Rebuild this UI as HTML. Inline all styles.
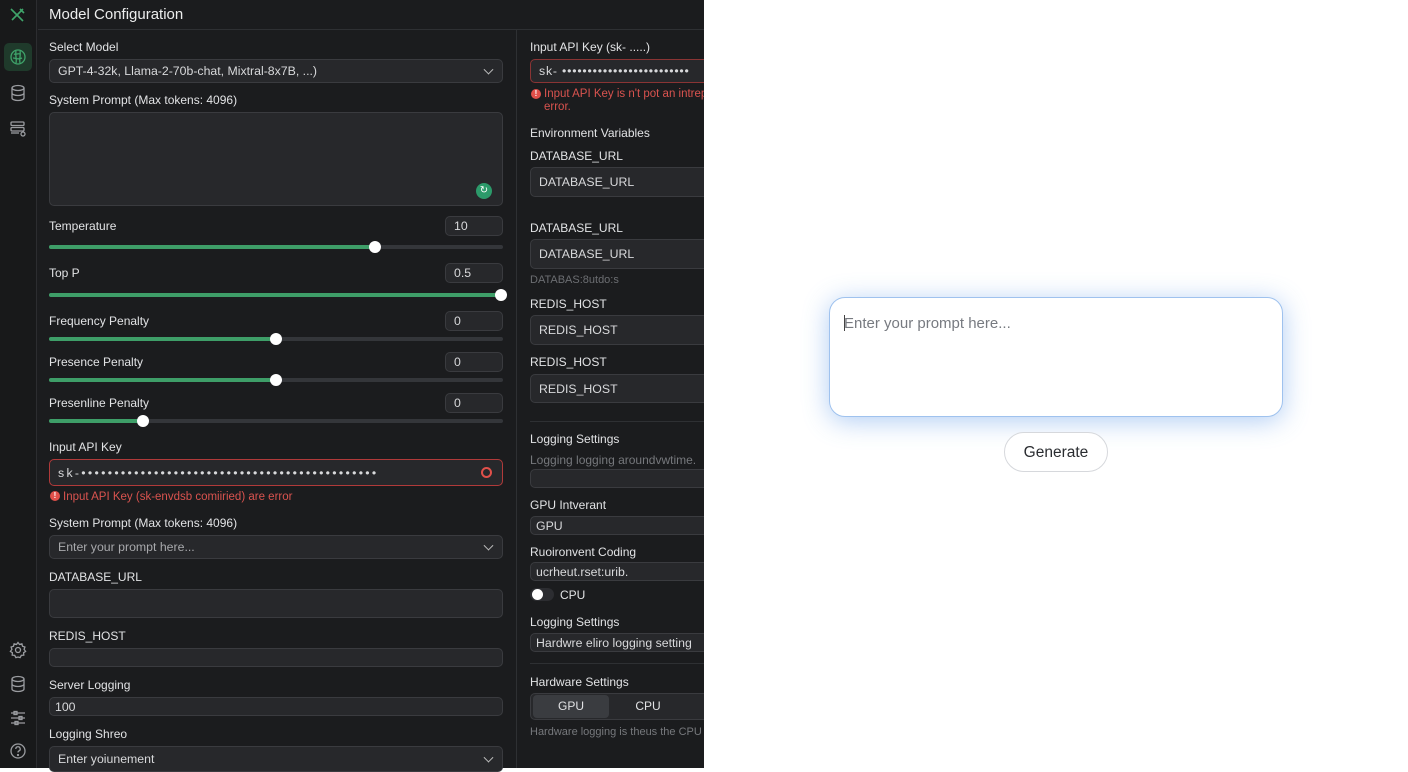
<!DOCTYPE html>
<html><head><meta charset="utf-8"><style>
*{box-sizing:border-box;margin:0;padding:0}
body{width:1408px;height:768px;overflow:hidden;background:#fff;font-family:"Liberation Sans",sans-serif;position:relative}
.a{position:absolute}
#dark{left:0;top:0;width:704px;height:768px;background:#1b1c1e}
#side{left:0;top:0;width:37px;height:768px;background:#18191a;border-right:1px solid #2c2d30}
.lbl{position:absolute;color:#e2e3e5;font-size:12px;line-height:14px}
.box{position:absolute;background:#27282b;border:1px solid #3a3b3f;border-radius:5px;color:#d8d9db;font-size:12.3px;display:flex;align-items:center;padding-left:8px}
.track{position:absolute;height:4px;border-radius:2px;background:#34363a}
.fill{position:absolute;left:0;top:0;height:4px;border-radius:2px;background:#3e9e68}
.thumb{position:absolute;width:12px;height:12px;border-radius:50%;background:#fff;top:-4px}
.chev{position:absolute;right:10px;top:50%;width:7px;height:7px;border-right:1.5px solid #bbb;border-bottom:1.5px solid #bbb;transform:translateY(-70%) rotate(45deg)}
.ic{position:absolute;left:9px}
</style></head><body>
<div id="dark" class="a"></div>
<div id="side" class="a"></div>
<svg class="ic" style="top:7px" width="18" height="16" viewBox="0 0 18 16" fill="none" stroke="#3fa46a" stroke-width="1.6"><path d="M2 2l12 12M14 2L6 10M3 13l3-3M11 2l4 4"/></svg>
<div class="a" style="left:4px;top:43px;width:28px;height:28px;border-radius:5px;background:#1f3a2b"></div>
<svg class="ic" style="top:48px" width="18" height="18" viewBox="0 0 18 18" fill="none" stroke="#3fa46a" stroke-width="1.3"><circle cx="9" cy="9" r="7"/><path d="M5 6c2 1 4-1 6 0M4 10c3 0 5 2 9 0M7 3c-1 4 1 8 0 12M11 3c1 4-1 8 0 12"/></svg>
<svg class="ic" style="top:84px" width="18" height="18" viewBox="0 0 18 18" fill="none" stroke="#9a9ca0" stroke-width="1.3"><ellipse cx="9" cy="4" rx="6" ry="2.5"/><path d="M3 4v10c0 1.4 2.7 2.5 6 2.5s6-1.1 6-2.5V4M3 9c0 1.4 2.7 2.5 6 2.5s6-1.1 6-2.5"/></svg>
<svg class="ic" style="top:120px" width="18" height="18" viewBox="0 0 18 18" fill="none" stroke="#9a9ca0" stroke-width="1.3"><rect x="2" y="2" width="13" height="3.5" rx="1"/><rect x="2" y="7.5" width="13" height="3.5" rx="1"/><path d="M2 13h8"/><circle cx="14" cy="14" r="2"/></svg>
<svg class="ic" style="top:641px" width="18" height="18" viewBox="0 0 18 18" fill="none" stroke="#9a9ca0" stroke-width="1.3"><circle cx="9" cy="9" r="2.5"/><path d="M9 1.5l1.5 2 2.4-.7.6 2.4 2.4.8-.8 2.4 1.5 2-2 1.3.2 2.5-2.5.2-1.2 2.2L9 16l-2.1.6-1.2-2.2-2.5-.2.2-2.5-2-1.3 1.5-2-.8-2.4 2.4-.8.6-2.4 2.4.7z"/></svg>
<svg class="ic" style="top:675px" width="18" height="18" viewBox="0 0 18 18" fill="none" stroke="#9a9ca0" stroke-width="1.3"><ellipse cx="9" cy="4" rx="6" ry="2.5"/><path d="M3 4v10c0 1.4 2.7 2.5 6 2.5s6-1.1 6-2.5V4M3 9c0 1.4 2.7 2.5 6 2.5s6-1.1 6-2.5"/></svg>
<svg class="ic" style="top:709px" width="18" height="18" viewBox="0 0 18 18" fill="none" stroke="#9a9ca0" stroke-width="1.3"><path d="M2 4h14M2 9h14M2 14h14"/><rect x="5" y="2.5" width="3" height="3"/><rect x="10" y="7.5" width="3" height="3"/><rect x="6" y="12.5" width="3" height="3"/></svg>
<svg class="ic" style="top:742px" width="18" height="18" viewBox="0 0 18 18" fill="none" stroke="#9a9ca0" stroke-width="1.3"><circle cx="9" cy="9" r="7"/><path d="M6.8 7a2.2 2.2 0 1 1 3 2c-.6.3-.8.7-.8 1.5"/><circle cx="9" cy="13" r=".5"/></svg>

<div class="a" style="left:49px;top:6px;color:#eceded;font-size:15px">Model Configuration</div>
<div class="a" style="left:38px;top:29px;width:666px;height:1px;background:#2e3033"></div>
<div class="a" style="left:516px;top:30px;width:1px;height:738px;background:#2e3033"></div>

<div class="lbl" style="left:49px;top:40px">Select Model</div>
<div class="box" style="left:49px;top:59px;width:454px;height:24px">GPT-4-32k, Llama-2-70b-chat, Mixtral-8x7B, ...)<span class="chev"></span></div>
<div class="lbl" style="left:49px;top:93px">System Prompt (Max tokens: 4096)</div>
<div class="box" style="left:49px;top:112px;width:454px;height:94px"></div>
<div class="a" style="left:476px;top:183px;width:16px;height:16px;border-radius:50%;background:#2c9a6a;color:#fff;font-size:10px;text-align:center;line-height:16px">↻</div>

<div class="lbl" style="left:49px;top:219px">Temperature</div>
<div class="box" style="left:445px;top:216px;width:58px;height:20px">10</div>
<div class="track" style="left:49px;top:245px;width:454px"><div class="fill" style="width:326px"></div><div class="thumb" style="left:320px"></div></div>

<div class="lbl" style="left:49px;top:266px">Top P</div>
<div class="box" style="left:445px;top:263px;width:58px;height:20px">0.5</div>
<div class="track" style="left:49px;top:293px;width:454px"><div class="fill" style="width:452px"></div><div class="thumb" style="left:446px"></div></div>

<div class="lbl" style="left:49px;top:314px">Frequency Penalty</div>
<div class="box" style="left:445px;top:311px;width:58px;height:20px">0</div>
<div class="track" style="left:49px;top:337px;width:454px"><div class="fill" style="width:227px"></div><div class="thumb" style="left:221px"></div></div>

<div class="lbl" style="left:49px;top:355px">Presence Penalty</div>
<div class="box" style="left:445px;top:352px;width:58px;height:20px">0</div>
<div class="track" style="left:49px;top:378px;width:454px"><div class="fill" style="width:227px"></div><div class="thumb" style="left:221px"></div></div>

<div class="lbl" style="left:49px;top:396px">Presenline Penalty</div>
<div class="box" style="left:445px;top:393px;width:58px;height:20px">0</div>
<div class="track" style="left:49px;top:419px;width:454px"><div class="fill" style="width:94px"></div><div class="thumb" style="left:88px"></div></div>

<div class="lbl" style="left:49px;top:440px">Input API Key</div>
<div class="box" style="left:49px;top:459px;width:454px;height:27px;border-color:#b13a3a;letter-spacing:2.3px">sk-•••••••••••••••••••••••••••••••••••••••••••••<span class="a" style="right:10px;top:7px;width:11px;height:11px;border-radius:50%;border:2px solid #e0504a"></span></div>
<div class="a" style="left:50px;top:491px;width:10px;height:10px;border-radius:50%;background:#e0504a;color:#fff;font-size:8px;text-align:center;line-height:10px;font-weight:bold">!</div>
<div class="lbl" style="left:63px;top:490px;color:#d9534f;font-size:11.5px">Input API Key (sk-envdsb comiiried) are error</div>

<div class="lbl" style="left:49px;top:516px">System Prompt (Max tokens: 4096)</div>
<div class="box" style="left:49px;top:535px;width:454px;height:24px;color:#a8a9ac">Enter your prompt here...<span class="chev"></span></div>
<div class="lbl" style="left:49px;top:570px">DATABASE_URL</div>
<div class="box" style="left:49px;top:589px;width:454px;height:29px"></div>
<div class="lbl" style="left:49px;top:629px">REDIS_HOST</div>
<div class="box" style="left:49px;top:648px;width:454px;height:19px"></div>
<div class="lbl" style="left:49px;top:678px">Server Logging</div>
<div class="box" style="left:49px;top:697px;width:454px;height:19px;padding-left:5px">100</div>
<div class="lbl" style="left:49px;top:727px">Logging Shreo</div>
<div class="box" style="left:49px;top:746px;width:454px;height:26px">Enter yoiunement<span class="chev" style="top:12px"></span></div>

<div style="position:absolute;left:517px;top:30px;width:187px;height:738px;overflow:hidden">
<div style="position:absolute;left:-517px;top:-30px;width:704px;height:768px">
<div class="lbl" style="left:530px;top:40px">Input API Key (sk- .....)</div>
<div class="box" style="left:530px;top:59px;width:200px;height:24px;border-color:#8a3434;letter-spacing:0.8px">sk- •••••••••••••••••••••••••</div>
<div class="a" style="left:531px;top:89px;width:10px;height:10px;border-radius:50%;background:#e0504a;color:#fff;font-size:8px;text-align:center;line-height:10px;font-weight:bold">!</div>
<div class="lbl" style="left:544px;top:88px;color:#d9534f;font-size:11.5px;line-height:13px;white-space:nowrap">Input API Key is n't pot an intrepret<br>error.</div>
<div class="lbl" style="left:530px;top:126px">Environment Variables</div>
<div class="lbl" style="left:530px;top:149px">DATABASE_URL</div>
<div class="box" style="left:530px;top:167px;width:200px;height:30px">DATABASE_URL</div>
<div class="lbl" style="left:530px;top:221px">DATABASE_URL</div>
<div class="box" style="left:530px;top:239px;width:200px;height:30px">DATABASE_URL</div>
<div class="lbl" style="left:530px;top:273px;color:#6c6e72;font-size:11px">DATABAS:8utdo:s</div>
<div class="lbl" style="left:530px;top:297px">REDIS_HOST</div>
<div class="box" style="left:530px;top:315px;width:200px;height:30px">REDIS_HOST</div>
<div class="lbl" style="left:530px;top:355px">REDIS_HOST</div>
<div class="box" style="left:530px;top:374px;width:200px;height:29px">REDIS_HOST</div>
<div class="a" style="left:530px;top:421px;width:200px;height:1px;background:#2e3033"></div>
<div class="lbl" style="left:530px;top:432px">Logging Settings</div>
<div class="lbl" style="left:530px;top:453px;color:#76787c">Logging logging aroundvwtime.</div>
<div class="box" style="left:530px;top:469px;width:200px;height:19px"></div>
<div class="lbl" style="left:530px;top:498px">GPU Intverant</div>
<div class="box" style="left:530px;top:516px;width:200px;height:19px;padding-left:5px">GPU</div>
<div class="lbl" style="left:530px;top:545px">Ruoironvent Coding</div>
<div class="box" style="left:530px;top:562px;width:200px;height:19px;padding-left:5px">ucrheut.rset:urib.</div>
<div class="a" style="left:530px;top:588px;width:24px;height:13px;border-radius:7px;background:#2c2d31"></div>
<div class="a" style="left:532px;top:589px;width:11px;height:11px;border-radius:50%;background:#fff"></div>
<div class="lbl" style="left:560px;top:588px">CPU</div>
<div class="lbl" style="left:530px;top:615px">Logging Settings</div>
<div class="box" style="left:530px;top:633px;width:200px;height:19px;padding-left:5px">Hardwre eliro logging setting</div>
<div class="a" style="left:530px;top:663px;width:200px;height:1px;background:#2e3033"></div>
<div class="lbl" style="left:530px;top:675px">Hardware Settings</div>
<div class="box" style="left:530px;top:693px;width:200px;height:27px;padding:0"></div>
<div class="a" style="left:533px;top:695px;width:76px;height:23px;border-radius:4px;background:#3a3c40;color:#e2e3e5;font-size:12px;text-align:center;line-height:23px">GPU</div>
<div class="a" style="left:610px;top:695px;width:76px;height:23px;color:#e2e3e5;font-size:12px;text-align:center;line-height:23px">CPU</div>
<div class="lbl" style="left:530px;top:725px;color:#76787c;font-size:11px;white-space:nowrap">Hardware logging is theus the CPU</div>
</div></div>

<div class="a" style="left:829px;top:297px;width:454px;height:120px;border:1px solid #9fc2ee;border-radius:16px;background:#fff;box-shadow:0 4px 26px rgba(80,145,230,0.45)"></div>
<div class="a" style="left:844px;top:315px;width:1px;height:16px;background:#444"></div>
<div class="a" style="left:844px;top:315px;color:#777a80;font-size:15px">Enter your prompt here...</div>
<div class="a" style="left:1004px;top:432px;width:104px;height:40px;border:1px solid #d6d8dc;border-radius:20px;background:#fff;color:#2a2c30;font-size:15.5px;text-align:center;line-height:39px">Generate</div>
</body></html>
